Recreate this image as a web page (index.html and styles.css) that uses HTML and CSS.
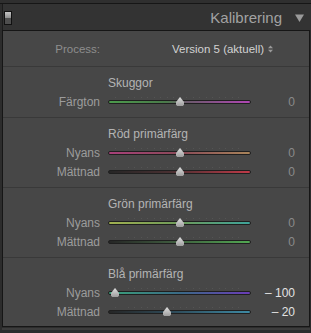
FILE: index.html
```html
<!DOCTYPE html>
<html lang="sv">
<head>
  <meta charset="UTF-8">
  <title>Kalibrering</title>
  <link rel="stylesheet" href="styles.css">
</head>
<body>
  <div class="top-strip"></div>
  <div class="panel-header">
    <span class="switch"><span class="switch-on"></span><span class="switch-off"></span></span>
    <span class="panel-title">Kalibrering</span>
    <svg class="collapse" width="9" height="8" viewBox="0 0 9 8"><path d="M0 0.5 H9 L4.5 8 Z" fill="#9a9a9a"/></svg>
  </div>

  <div class="panel-body">
    <div class="process-row">
      <span class="label">Process:</span>
      <span class="process-value">Version 5 (aktuell)</span>
      <svg class="updown" width="5" height="8" viewBox="0 0 5 8"><path d="M0 3.2 L2.5 0.4 L5 3.2 Z M0 4.8 L2.5 7.6 L5 4.8 Z" fill="#9a9a9a"/></svg>
    </div>

    <div class="section">
      <div class="section-title">Skuggor</div>
      <div class="slider-row">
        <span class="label">Färgton</span>
        <div class="slider"><div class="track track-shadow"></div><span class="thumb" style="left: 71px"></span></div>
        <span class="value">0</span>
      </div>
    </div>

    <div class="section">
      <div class="section-title">Röd primärfärg</div>
      <div class="slider-row">
        <span class="label">Nyans</span>
        <div class="slider"><div class="track track-red-hue"></div><span class="thumb" style="left: 71px"></span></div>
        <span class="value">0</span>
      </div>
      <div class="slider-row">
        <span class="label">Mättnad</span>
        <div class="slider"><div class="track track-red-sat"></div><span class="thumb" style="left: 71px"></span></div>
        <span class="value">0</span>
      </div>
    </div>

    <div class="section">
      <div class="section-title">Grön primärfärg</div>
      <div class="slider-row">
        <span class="label">Nyans</span>
        <div class="slider"><div class="track track-green-hue"></div><span class="thumb" style="left: 71px"></span></div>
        <span class="value">0</span>
      </div>
      <div class="slider-row">
        <span class="label">Mättnad</span>
        <div class="slider"><div class="track track-green-sat"></div><span class="thumb" style="left: 71px"></span></div>
        <span class="value">0</span>
      </div>
    </div>

    <div class="section last">
      <div class="section-title">Blå primärfärg</div>
      <div class="slider-row">
        <span class="label">Nyans</span>
        <div class="slider"><div class="track track-blue-hue"></div><span class="thumb" style="left: 6px"></span></div>
        <span class="value changed">– 100</span>
      </div>
      <div class="slider-row">
        <span class="label">Mättnad</span>
        <div class="slider"><div class="track track-blue-sat"></div><span class="thumb" style="left: 58px"></span></div>
        <span class="value changed">– 20</span>
      </div>
    </div>
  </div>
  <div class="bottom-strip"></div>
</body>
</html>
```

FILE: styles.css
```css
body {
  margin: 0;
  width: 311px;
  height: 333px;
  overflow: hidden;
  background: #2c2c2c;
  font-family: 'Liberation Sans', Arial, sans-serif;
  font-size: 12px;
  color: #a0a0a0;
}
.top-strip {
  height: 3px;
  background: #2f2f2f;
  border-bottom: 1px solid #161616;
}
.panel-header {
  height: 26px;
  margin-left: 2px;
  background: #333333;
  border-left: 1px solid #1c1c1c;
  display: flex;
  align-items: center;
  padding-right: 7px;
}
.switch {
  width: 6px;
  height: 12px;
  margin-left: 1px;
  border: 1px solid #111;
  display: flex;
  flex-direction: column;
  margin-top: 1px;
}
.switch-on {
  flex: 1;
  background: linear-gradient(#c4c4c4, #8e8e8e);
}
.switch-off {
  flex: 1;
  background: #4e4e4e;
}
.panel-title {
  margin-left: auto;
  font-size: 15px;
  color: #a2a2a2;
  margin-right: 13px;
}
.collapse {
  display: block;
  margin-top: 1px;
}
.panel-body {
  margin: 0 1px 0 2px;
  background: #474747;
  border: 1px solid #161616;
}
.process-row {
  height: 35px;
  display: flex;
  align-items: center;
  font-size: 11.5px;
}
.label {
  width: 97px;
  text-align: right;
  flex-shrink: 0;
  color: #9c9c9c;
}
.process-row .label {
  color: #8e8e8e;
}
.process-value {
  margin-left: 72px;
  color: #d2d2d2;
}
.updown {
  display: block;
  margin-left: 4px;
}
.section {
  border-top: 1px solid #393939;
  padding: 7px 0 6px;
}
.section.last {
  padding-bottom: 5px;
}
.section-title {
  height: 18px;
  line-height: 18px;
  padding-left: 105px;
  color: #b4b4b4;
}
.slider-row {
  height: 19px;
  display: flex;
  align-items: center;
}
.slider {
  position: relative;
  width: 142px;
  height: 19px;
  margin-left: 9px;
  display: flex;
  align-items: center;
}
.slider::before {
  content: "";
  position: absolute;
  left: 6px;
  right: 6px;
  top: 5px;
  height: 1px;
  background: repeating-linear-gradient(90deg, rgba(255,255,255,0.07) 0 1px, transparent 1px 6.5px);
}
.track {
  width: 100%;
  height: 2px;
  border: 1px solid #1f1f1f;
  border-radius: 2px;
  box-sizing: content-box;
  margin-left: -1px;
}
.track-shadow { background: linear-gradient(90deg, #4c9a4c, #4a7a4a 40%, #6a5a6a 55%, #b046b4); }
.track-red-hue { background: linear-gradient(90deg, #a8407a, #8a4a58 50%, #a8845a); }
.track-red-sat { background: linear-gradient(90deg, #262626, #4a3032 45%, #c03a48); }
.track-green-hue { background: linear-gradient(90deg, #a0b050, #6e9a5a 50%, #3ea39a); }
.track-green-sat { background: linear-gradient(90deg, #262626, #3e5a3e 45%, #52a852); }
.track-blue-hue { background: linear-gradient(90deg, #3aa07a, #3a6a86 50%, #6a3cb8); }
.track-blue-sat { background: linear-gradient(90deg, #262626, #2e4a58 45%, #3e8aa4); }
.thumb {
  position: absolute;
  top: 5px;
  width: 8px;
  height: 9px;
  margin-left: -4px;
  background: linear-gradient(#e0e0e0, #9c9c9c);
  clip-path: polygon(50% 0, 100% 55%, 100% 85%, 85% 100%, 15% 100%, 0 85%, 0 55%);
}
.value {
  width: 44px;
  text-align: right;
  color: #8a8a8a;
}
.value.changed {
  color: #e2e2e2;
}
.bottom-strip {
  height: 2px;
  margin: 1px 1px 0 2px;
  background: #3c3c3c;
}
```
